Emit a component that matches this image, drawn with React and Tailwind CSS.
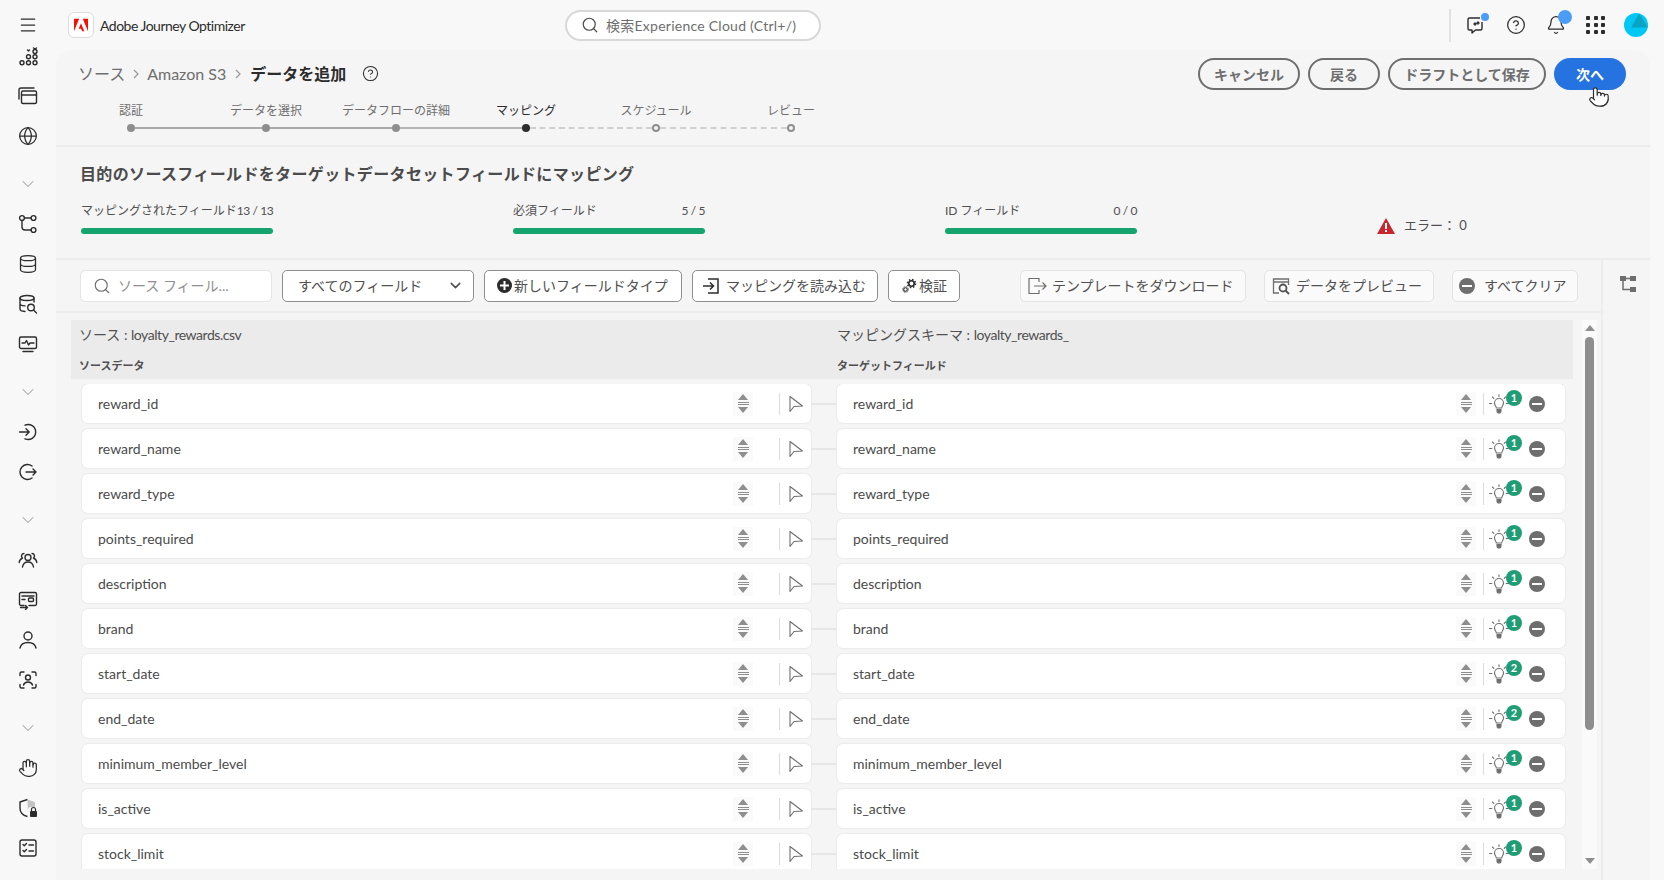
import { Bell, ChevronDown, CircleHelp, Database, Globe, Hand, Menu, Pointer, Search } from 'lucide-react';

const FONT = "font-['Lato','Noto_Sans_CJK_JP',sans-serif]";

// ---- sidebar drawings ----
const Svg = ({ children, size = 20, className = '' }) => (
  <svg width={size} height={size} viewBox="0 0 20 20" fill="none" stroke="currentColor" strokeWidth="1.4" strokeLinecap="round" strokeLinejoin="round" className={className}>
    {children}
  </svg>
);

const AppsIcon = () => (
  <Svg>
    {[[4, 16.700], [10.500, 16.700], [17, 16.700], [10.500, 10.700], [17, 10.700], [17, 5.500]].map(([x, y]) => (
      <circle key={`${x}-${y}`} cx={x} cy={y} r="2" />
    ))}
    <path d="M9.500 4l1 1 1-1" />
    <path d="M15.500 2l1.500 1 1.500-1" />
  </Svg>
);
const CardsIcon = () => (
  <Svg>
    <rect x="3.5" y="5" width="15" height="12.5" rx="1.5" />
    <path d="M3.5 9h15" />
    <path d="M1 13V4a2 2 0 0 1 2-2h13" />
  </Svg>
);
const FlowIcon = () => (
  <Svg>
    <circle cx="4" cy="4" r="2.4" />
    <circle cx="15.5" cy="4" r="2.4" />
    <circle cx="15.5" cy="16" r="2.4" />
    <path d="M6.5 4h6.5M4 6.5V13a3 3 0 0 0 3 3h6" />
  </Svg>
);
const DataSearchIcon = () => (
  <Svg>
    <ellipse cx="9" cy="4" rx="7" ry="2.5" />
    <path d="M2 4v11c0 1.4 2 2.3 5 2.5M16 4v4M2 9.5c0 1.2 2 2.2 5 2.4" />
    <circle cx="13" cy="13.5" r="3.3" />
    <path d="M15.5 16l3 3" />
  </Svg>
);
const MonitorIcon = () => (
  <Svg>
    <rect x="1.5" y="3" width="17" height="11.5" rx="1.5" />
    <path d="M4 9h3l1.5-2.5 2 4.5 1.5-2h4M5 17.5h10" />
  </Svg>
);
const EnterIcon = () => (
  <Svg>
    <path d="M7 3.2a7.5 7.5 0 1 1 0 13.6" />
    <path d="M1.5 10h9.5M8 6.8l3.2 3.2L8 13.2" />
  </Svg>
);
const ExitIcon = () => (
  <Svg>
    <path d="M14 4a7.5 7.5 0 1 0 0 12" />
    <path d="M8 10h10M15 7l3 3-3 3" />
  </Svg>
);
const PeopleIcon = () => (
  <Svg>
    <circle cx="10" cy="7.5" r="3" />
    <path d="M4.5 17c.5-3 2.5-5 5.5-5s5 2 5.500 5" />
    <path d="M6 3.500a2.500 2.500 0 0 0-1.500 4.500c-1.800.8-3 2.300-3.300 4.500M14 3.500a2.500 2.500 0 0 1 1.500 4.500c1.800.8 3 2.300 3.300 4.500" />
  </Svg>
);
const JourneyCardIcon = () => (
  <Svg>
    <path d="M6 15.500H3a1.500 1.500 0 0 1-1.500-1.500V4A1.500 1.500 0 0 1 3 2.500h14A1.500 1.500 0 0 1 18.500 4v10a1.500 1.500 0 0 1-1.500 1.500h-6" />
    <path d="M4 6h12M4 9.500h3" />
    <rect x="10.500" y="8" width="5" height="3.500" rx="1" />
    <path d="M2.500 17.500h7M7.500 15.500l2 2-2 2" />
  </Svg>
);
const UserIcon = () => (
  <Svg>
    <circle cx="10" cy="6" r="4" />
    <path d="M2 18c.8-3.800 4-5.500 8-5.500s7.200 1.700 8 5.500" />
  </Svg>
);
const ScanIcon = () => (
  <Svg>
    <path d="M2 5.500V3.500a1.500 1.500 0 0 1 1.500-1.500H6M14 2h2.500A1.500 1.500 0 0 1 18 3.500v2M2 14.500v2A1.500 1.500 0 0 0 3.500 18H6M14 18h2.500a1.500 1.500 0 0 0 1.500-1.500v-2" />
    <circle cx="10" cy="7.500" r="2.500" />
    <path d="M5.500 15c.6-2 2.300-3 4.500-3s3.900 1 4.500 3" />
  </Svg>
);
const ShieldLockIcon = () => (
  <svg width="20" height="20" viewBox="0 0 20 20" fill="none">
    <path d="M9.500 1.500L2 4v6c0 4.500 3 7.500 7.500 8.500" stroke="currentColor" strokeWidth="1.400" strokeLinejoin="round" />
    <path d="M9.500 1.500L17 4v5h-4a3 3 0 0 0-3 3v5z" fill="#c4c4c4" />
    <rect x="12" y="13" width="7" height="6" rx="1" fill="currentColor" />
    <path d="M13.500 13v-1.500a2 2 0 0 1 4 0V13" stroke="currentColor" strokeWidth="1.200" />
  </svg>
);
const ChecklistIcon = () => (
  <Svg>
    <rect x="2" y="2" width="16" height="16" rx="2" />
    <path d="M5 6.500l1.300 1.300L8.500 5.500M5 12.500l1.300 1.300 2.200-2.300M11 7h4.500M11 13h4.500" />
  </Svg>
);

const sidebar = [
  { icon: <AppsIcon /> },
  { icon: <CardsIcon /> },
  { icon: <Globe size={20} strokeWidth={1.5} /> },
  { chevron: true },
  { icon: <FlowIcon /> },
  { icon: <Database size={20} strokeWidth={1.5} /> },
  { icon: <DataSearchIcon /> },
  { icon: <MonitorIcon /> },
  { chevron: true },
  { icon: <EnterIcon /> },
  { icon: <ExitIcon /> },
  { chevron: true },
  { icon: <PeopleIcon /> },
  { icon: <JourneyCardIcon /> },
  { icon: <UserIcon /> },
  { icon: <ScanIcon /> },
  { chevron: true },
  { icon: <Hand size={20} strokeWidth={1.5} /> },
  { icon: <ShieldLockIcon /> },
  { icon: <ChecklistIcon /> },
];

const steps = [
  { label: '認証', width: 'w-[130px]' },
  { label: 'データを選択', width: 'w-[140px]' },
  { label: 'データフローの詳細', width: 'w-[120px]' },
  { label: 'マッピング', width: 'w-[140px]', current: true },
  { label: 'スケジュール', width: 'w-[120px]' },
  { label: 'レビュー', width: 'w-[150px]' },
];

const stats = [
  { label: 'マッピングされたフィールド', value: '13 / 13' },
  { label: '必須フィールド', value: '5 / 5' },
  { label: 'ID フィールド', value: '0 / 0' },
];

const fields = [
  ['reward_id', 1],
  ['reward_name', 1],
  ['reward_type', 1],
  ['points_required', 1],
  ['description', 1],
  ['brand', 1],
  ['start_date', 2],
  ['end_date', 2],
  ['minimum_member_level', 1],
  ['is_active', 1],
  ['stock_limit', 1],
];

const Stepper = () => (
  <div className="flex h-[24px] w-[20px] flex-col items-center justify-center gap-[1px] bg-[#fafafa]">
    <span className="h-0 w-0 border-x-[5px] border-b-[6px] border-x-transparent border-b-[#8e8e8e]" />
    <span className="mt-[1px] h-[1px] w-[11px] bg-[#8e8e8e]" />
    <span className="mb-[1px] h-[1px] w-[11px] bg-[#8e8e8e]" />
    <span className="h-0 w-0 border-x-[5px] border-t-[6px] border-x-transparent border-t-[#8e8e8e]" />
  </div>
);

const MinusDot = ({ size = 'w-4 h-4', bar = 'w-[10px]' }) => (
  <span className={`flex shrink-0 items-center justify-center rounded-full bg-[#6e6e6e] ${size}`}>
    <span className={`h-[2px] bg-white ${bar}`} />
  </span>
);

const BulbIcon = () => (
  <svg width="20" height="20" viewBox="0 0 20 20" fill="none" stroke="#6e6e6e" strokeWidth="1.1" strokeLinecap="round">
    <path d="M7.300 14c0-2-1.800-2.700-1.800-5a4.500 4.500 0 0 1 9 0c0 2.300-1.800 3-1.800 5z" />
    <path d="M8 15.500h4v1.500a2 2 0 0 1-4 0z" fill="#6e6e6e" />
    <path d="M10 .8v1.800M3.500 3l1.300 1.300M16.500 3l-1.300 1.300M.5 9.500h2.300M17.200 9.500h2.300" />
  </svg>
);

const ArrowCursor = () => (
  <svg width="16" height="18" viewBox="0 0 16 18" fill="none" stroke="#6e6e6e" strokeWidth="1.100" strokeLinejoin="round">
    <path d="M2 1.500V16.500L6 11.500L14.500 11z" />
  </svg>
);

function FieldRow({ name, count }) {
  return (
    <div className="flex h-[39px] shrink-0 items-center">
      <div className="flex h-full w-[729px] items-center rounded-md bg-white pl-4 pr-[7px] shadow-[0_0_0_1px_#ececec]">
        <span className="flex-1 text-[14px] text-[#4b4b4b]">{name}</span>
        <Stepper />
        <span className="ml-[26px] h-[22px] w-[1px] bg-[#dcdcdc]" />
        <span className="ml-2"><ArrowCursor /></span>
      </div>
      <span className="h-[2px] w-[26px] bg-[#e6e6e6] px-0" />
      <div className="flex h-full w-[728px] items-center rounded-md bg-white pl-4 pr-5 shadow-[0_0_0_1px_#ececec]">
        <span className="flex-1 text-[14px] text-[#4b4b4b]">{name}</span>
        <Stepper />
        <span className="ml-[7px] h-[22px] w-[1px] bg-[#dcdcdc]" />
        <span className="relative ml-[5px] flex">
          <BulbIcon />
          <span className="absolute -top-[4px] left-[17px] flex h-4 w-4 items-center justify-center rounded-full bg-[#1f9d74] text-[11px] font-bold leading-none text-white">
            {count}
          </span>
        </span>
        <span className="ml-5"><MinusDot /></span>
      </div>
    </div>
  );
}

const ToolButton = ({ width, muted, children }) => (
  <button className={`flex h-[32px] shrink-0 items-center rounded-[5px] border text-[14px] text-[#505050] ${width} ${muted ? 'border-[#e4e4e4] bg-[#fafafa]' : 'border-[#8e8e8e] bg-white'}`}>
    {children}
  </button>
);

const PillButton = ({ width, children }) => (
  <button className={`flex h-[32px] items-center justify-center rounded-full border-2 border-[#6e6e6e] text-[14px] font-bold text-[#6e6e6e] ${width}`}>
    {children}
  </button>
);

export default function App() {
  return (
    <div className={`flex h-screen w-full flex-col overflow-hidden bg-[#f8f8f8] text-[#2c2c2c] ${FONT}`}>
      {/* top bar */}
      <header className="flex h-[50px] shrink-0 items-center">
        <div className="flex w-[56px] justify-center pr-[1px]">
          <Menu size={20} strokeWidth={1.5} />
        </div>
        <div className="ml-3 flex h-[26px] w-[26px] items-center justify-center rounded-md border border-[#dcdcdc] bg-white">
          <svg width="14" height="14" viewBox="0 0 24 24" fill="#fa0f00">
            <path d="M13.966 22.624l-1.69-4.281H8.122l3.892-9.144 5.662 13.425zM8.884 1.376H0v21.248zm6.232 0H24v21.248z" />
          </svg>
        </div>
        <span className="ml-[6px] w-[465px] text-[14px] tracking-[-0.5px] text-[#2c2c2c]">Adobe Journey Optimizer</span>
        <div className="flex h-[31px] w-[256px] items-center rounded-full border-2 border-[#d8d8d8] bg-white pl-[14px]">
          <Search size={18} strokeWidth={1.6} className="text-[#4b4b4b]" />
          <span className="ml-[7px] text-[14px] tracking-[0.25px] text-[#6e6e6e]">検索Experience Cloud (Ctrl+/)</span>
        </div>
        <div className="ml-auto flex items-center pr-[16px]">
          <span className="mr-[15px] h-[33px] w-[2px] bg-[#e1e1e1]" />
          <div className="relative flex w-[20px] justify-center">
            <svg width="20" height="20" viewBox="0 0 20 20" fill="none" stroke="#2c2c2c" strokeWidth="1.400" strokeLinejoin="round">
              <path d="M14 3H3.500A1.500 1.500 0 0 0 2 4.500v9A1.500 1.500 0 0 0 3.500 15H6v3l3.500-3h5a1.500 1.500 0 0 0 1.500-1.500V7" />
              <path d="M9 8l1 1-1 1-1-1zM12 7l1 1-1 1-1-1z" fill="#2c2c2c" />
            </svg>
            <span className="absolute -top-[2px] right-[-3px] h-2 w-2 rounded-full bg-[#4b9cf5]" />
          </div>
          <div className="ml-5 flex w-[20px] justify-center"><CircleHelp size={20} strokeWidth={1.5} /></div>
          <div className="relative ml-5 flex w-[20px] justify-center">
            <Bell size={20} strokeWidth={1.5} />
            <span className="absolute -top-[5px] right-[-6px] h-[14px] w-[14px] rounded-full bg-[#4b9cf5]" />
          </div>
          <div className="ml-5 grid w-[20px] grid-cols-3 gap-[3px]">
            {[0, 1, 2, 3, 4, 5, 6, 7, 8].map((i) => (
              <span key={i} className="h-[4px] w-[4px] rounded-[1px] bg-[#2c2c2c]" />
            ))}
          </div>
          <svg width="24" height="24" viewBox="0 0 24 24" className="ml-[18px]">
            <circle cx="12" cy="12" r="12" fill="#00c8f5" />
            <path d="M15 .5L24 14.500H7z" fill="#0aa3c4" />
          </svg>
        </div>
      </header>

      <div className="flex min-h-0 flex-1">
        {/* left rail */}
        <nav className="-mt-[14px] flex w-[56px] shrink-0 flex-col items-center text-[#2c2c2c]">
          {sidebar.map((item, i) =>
            item.chevron ? (
              <div key={i} className="mt-2 flex h-10 shrink-0 items-center justify-center text-[#8e8e8e]">
                <ChevronDown size={20} strokeWidth={1.2} />
              </div>
            ) : (
              <div key={i} className="flex h-10 shrink-0 items-center justify-center">{item.icon}</div>
            )
          )}
        </nav>

        {/* main panel */}
        <main className="relative mr-[14px] flex min-w-0 flex-1 flex-col rounded-t-2xl bg-[#f5f5f5]">
          {/* heading */}
          <section className="flex h-[95px] shrink-0 justify-between">
            <div>
              <div className="flex h-[47px] items-center pl-[22px] text-[16px]">
                <span className="text-[#6e6e6e]">ソース</span>
                <span className="mx-[7px] text-[#9a9a9a]">
                  <svg width="8" height="10" viewBox="0 0 8 10" fill="none" stroke="currentColor" strokeWidth="1.200"><path d="M2 1l4 4-4 4" /></svg>
                </span>
                <span className="text-[#6e6e6e]">Amazon S3</span>
                <span className="mx-[8px] text-[#9a9a9a]">
                  <svg width="8" height="10" viewBox="0 0 8 10" fill="none" stroke="currentColor" strokeWidth="1.200"><path d="M2 1l4 4-4 4" /></svg>
                </span>
                <span className="font-bold text-[#2c2c2c]">データを追加</span>
                <CircleHelp size={17} strokeWidth={1.5} className="ml-[16px]" />
              </div>
              <div className="flex pl-[10px] pt-[5px]">
                {steps.map((s) => (
                  <span key={s.label} className={`whitespace-nowrap text-center text-[12px] leading-[18px] ${s.width} ${s.current ? 'text-[#2c2c2c]' : 'text-[#6e6e6e]'}`}>
                    {s.label}
                  </span>
                ))}
              </div>
              <div className="flex items-center pl-[71px] pt-[4px]">
                <span className="h-2 w-2 rounded-full bg-[#8e8e8e]" />
                <span className="h-[2px] w-[127px] bg-[#a8a8a8]" />
                <span className="h-2 w-2 rounded-full bg-[#8e8e8e]" />
                <span className="h-[2px] w-[122px] bg-[#a8a8a8]" />
                <span className="h-2 w-2 rounded-full bg-[#8e8e8e]" />
                <span className="h-[2px] w-[122px] bg-[#b4b4b4]" />
                <span className="h-2 w-2 rounded-full bg-[#2c2c2c]" />
                <span className="w-[122px] border-t-2 border-dashed border-[#d0d0d0]" />
                <span className="h-2 w-2 rounded-full border-2 border-[#8e8e8e] bg-[#f5f5f5]" />
                <span className="w-[127px] border-t-2 border-dashed border-[#d0d0d0]" />
                <span className="h-2 w-2 rounded-full border-2 border-[#8e8e8e] bg-[#f5f5f5]" />
              </div>
            </div>
            <div className="flex gap-2 pr-[24px] pt-2">
              <PillButton width="w-[102px]">キャンセル</PillButton>
              <PillButton width="w-[72px]">戻る</PillButton>
              <PillButton width="w-[158px]">ドラフトとして保存</PillButton>
              <button className="relative flex h-[32px] w-[72px] items-center justify-center rounded-full bg-[#2473e0] text-[14px] font-bold text-white">
                次へ
                <Pointer size={22} strokeWidth={1.3} fill="#fff" className="absolute left-[34px] top-[28px] text-[#2c2c2c]" />
              </button>
            </div>
          </section>

          {/* summary */}
          <section className="h-[115px] shrink-0 border-y-2 border-[#ececec] pl-[25px]">
            <h1 className="-ml-[1px] pt-[15px] text-[16px] font-bold leading-[24px] tracking-[0.35px] text-[#4b4b4b]">
              目的のソースフィールドをターゲットデータセットフィールドにマッピング
            </h1>
            <div className="mt-[16px] flex">
              {stats.map((s) => (
                <div key={s.label} className="w-[432px] shrink-0">
                  <div className="flex w-[192px] items-center justify-between whitespace-nowrap text-[12px] leading-[18px] text-[#505050]">
                    <span>{s.label}</span>
                    <span className="tracking-[-0.4px]">{s.value}</span>
                  </div>
                  <div className="mt-[8px] h-[6px] w-[192px] rounded-full bg-[#15a46e]" />
                </div>
              ))}
              <div className="flex items-center pt-[14px]">
                <svg width="18" height="16" viewBox="0 0 18 16">
                  <path d="M9 0L18 16H0z" fill="#c9252d" />
                  <rect x="8" y="5" width="2" height="6" fill="#fff" />
                  <rect x="8" y="12" width="2" height="2" fill="#fff" />
                </svg>
                <span className="ml-[9px] text-[13px] text-[#505050]">エラー： 0</span>
              </div>
            </div>
          </section>

          {/* mapping area + right rail */}
          <div className="flex min-h-0 flex-1">
            <div className="flex w-[1547px] min-w-0 shrink-0 flex-col border-r-2 border-[#ececec]">
              <div className="flex h-[53px] shrink-0 items-center border-b-2 border-[#ececec] pl-[24px] pr-[23px]">
                <div className="flex h-[32px] w-[192px] items-center rounded-[5px] border border-[#e4e4e4] bg-white pl-[12px]">
                  <Search size={18} strokeWidth={1.5} className="text-[#6e6e6e]" />
                  <span className="ml-[7px] text-[14px] text-[#8e8e8e]">ソース フィール...</span>
                </div>
                <ToolButton width="ml-[10px] w-[192px] justify-between pl-[15px] pr-[9px]">
                  <span className="text-[#505050]">すべてのフィールド</span>
                  <ChevronDown size={17} strokeWidth={2.200} />
                </ToolButton>
                <ToolButton width="ml-[10px] w-[198px] pl-[12px]">
                  <span className="flex h-[15px] w-[15px] items-center justify-center rounded-full bg-[#2c2c2c] text-white">
                    <svg width="9" height="9" viewBox="0 0 9 9" stroke="currentColor" strokeWidth="2"><path d="M4.500 0v9M0 4.500h9" /></svg>
                  </span>
                  <span className="ml-[2px]">新しいフィールドタイプ</span>
                </ToolButton>
                <ToolButton width="ml-[10px] w-[186px] pl-[9px]">
                  <svg width="18" height="18" viewBox="0 0 18 18" fill="none" stroke="#2c2c2c" strokeWidth="1.500">
                    <path d="M6 2h10v14H6M1 9h10M8 5.500L11.500 9 8 12.500" />
                  </svg>
                  <span className="ml-[6px]">マッピングを読み込む</span>
                </ToolButton>
                <ToolButton width="ml-[10px] w-[72px] pl-[13px]">
                  <svg width="15" height="15" viewBox="0 0 15 15" fill="none" stroke="#2c2c2c">
                    <circle cx="9.500" cy="5.500" r="2.700" strokeWidth="1.600" />
                    <circle cx="9.500" cy="5.500" r="4" strokeWidth="1.600" strokeDasharray="1.500 1.640" />
                    <circle cx="3.500" cy="11.500" r="1.800" strokeWidth="1.100" />
                    <circle cx="3.500" cy="11.500" r="2.900" strokeWidth="1" strokeDasharray="1 1.270" />
                  </svg>
                  <span className="ml-[2px]">検証</span>
                </ToolButton>
                <div className="ml-auto flex gap-[18px]">
                  <ToolButton muted width="w-[226px] pl-[5px]">
                    <svg width="22" height="18" viewBox="0 0 22 18" fill="none" stroke="#6e6e6e" strokeWidth="1.200">
                      <path d="M13 5V1.500H3v15h10V13M8 9h12M16.500 5.500L20 9l-3.500 3.500" />
                    </svg>
                    <span className="ml-[4px]">テンプレートをダウンロード</span>
                  </ToolButton>
                  <ToolButton muted width="w-[170px] pl-[7px]">
                    <svg width="18" height="18" viewBox="0 0 18 18" fill="none" stroke="#6e6e6e" strokeWidth="1.300">
                      <path d="M7 16H1.500V2h15v6M1.500 5h15" />
                      <circle cx="11" cy="11" r="3.500" strokeWidth="1.800" stroke="#505050" />
                      <path d="M13.500 13.500L17 17" strokeWidth="1.800" stroke="#505050" />
                    </svg>
                    <span className="ml-[6px]">データをプレビュー</span>
                  </ToolButton>
                  <ToolButton muted width="w-[126px] pl-[6px]">
                    <MinusDot />
                    <span className="ml-[9px]">すべてクリア</span>
                  </ToolButton>
                </div>
              </div>

              <div className="flex min-h-0 flex-1 pb-[11px] pl-[15px] pt-[7px]">
                <div className="flex w-[1502px] shrink-0 flex-col">
                  <div className="flex h-[59px] shrink-0 bg-[#ebebeb] text-[#505050]">
                    <div className="w-[766px] shrink-0 pl-[8px] pt-[4px]">
                      <div className="text-[14px] leading-[21px]">ソース : <span className="tracking-[-0.45px]">loyalty_rewards.csv</span></div>
                      <div className="mt-[13px] text-[11px] font-bold leading-[16px]">ソースデータ</div>
                    </div>
                    <div className="pt-[4px]">
                      <div className="text-[14px] leading-[21px]">マッピングスキーマ : <span className="tracking-[-0.45px]">loyalty_rewards_</span></div>
                      <div className="mt-[13px] text-[11px] font-bold leading-[16px]">ターゲットフィールド</div>
                    </div>
                  </div>
                  <div className="mt-[5px] flex min-h-0 flex-1 flex-col gap-[6px] overflow-hidden pl-[11px]">
                    {fields.map(([name, count]) => (
                      <FieldRow key={name} name={name} count={count} />
                    ))}
                  </div>
                </div>
                {/* scrollbar */}
                <div className="ml-[9px] flex w-[15px] shrink-0 flex-col items-center bg-[#fafafa] pt-[5px]">
                  <span className="h-0 w-0 border-x-[5px] border-b-[6px] border-x-transparent border-b-[#8e8e8e]" />
                  <div className="mt-[6px] h-[393px] w-[9px] rounded-full bg-[#8e8e8e]" />
                  <span className="mb-[5px] mt-auto h-0 w-0 border-x-[5px] border-t-[6px] border-x-transparent border-t-[#8e8e8e]" />
                </div>
              </div>
            </div>

            <div className="flex flex-1 justify-center pt-[15px] pl-[2px]">
              <svg width="18" height="18" viewBox="0 0 18 18" fill="#6e6e6e">
                <rect x="1" y="1" width="6" height="5" />
                <rect x="11" y="1" width="6" height="5" />
                <rect x="11" y="12" width="6" height="5" />
                <path d="M4 6v8.500h7M7 3.500h4" fill="none" stroke="#6e6e6e" strokeWidth="1.500" />
              </svg>
            </div>
          </div>
        </main>
      </div>
    </div>
  );
}
